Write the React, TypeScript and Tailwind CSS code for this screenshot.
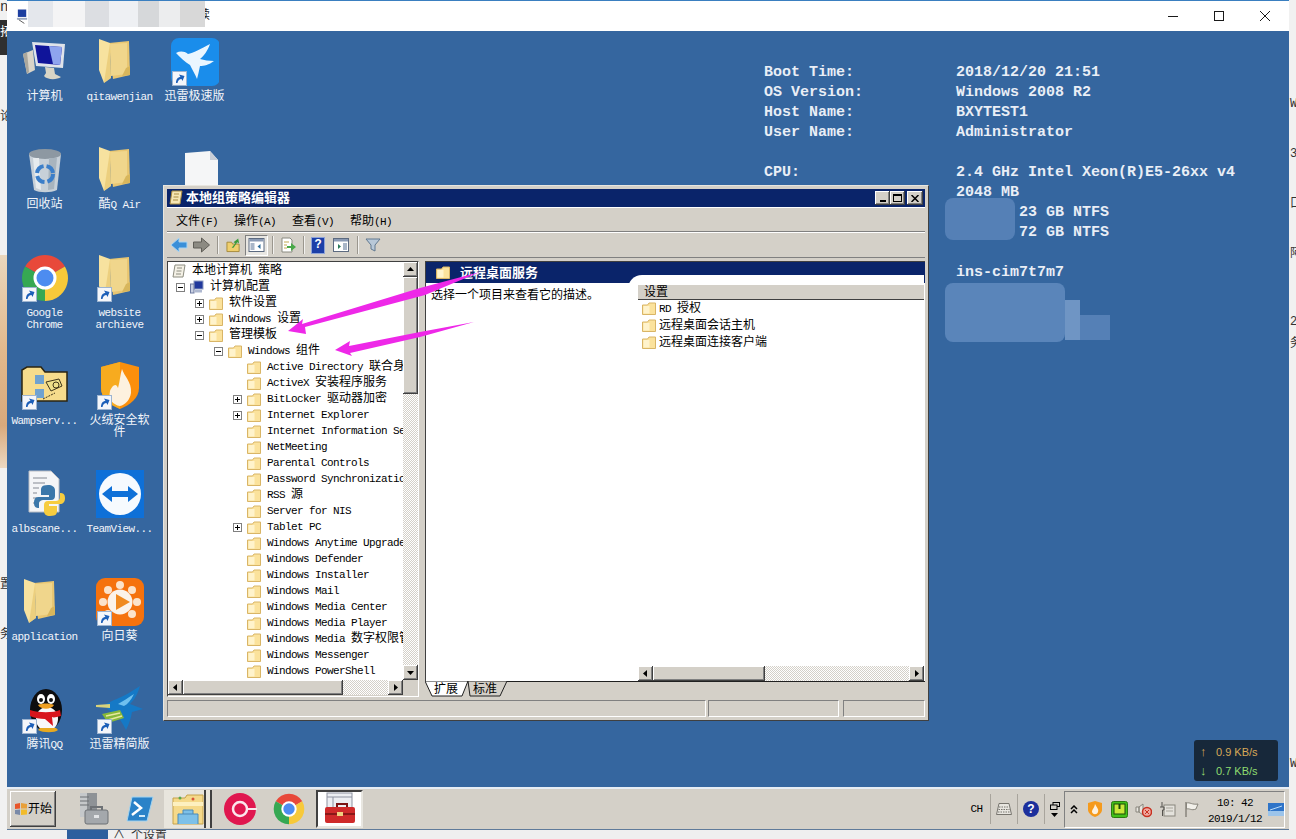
import type { ReactNode } from "react";

const raised = "shadow-[inset_-1px_-1px_#404040,inset_1px_1px_#ffffff,inset_-2px_-2px_#808080]";
const dither = "bg-[repeating-conic-gradient(#ffffff_0_25%,#d4d0c8_0_50%)] bg-[length:2px_2px]";

// latin runs get a narrower mono so they sit at 6px a char like the old bitmap font
function Txt({ text, wrap }: { text: string; wrap?: boolean }) {
  const parts = text.split(/([\x20-\x7e]+)/).filter(Boolean);
  return (
    <>
      {parts.map((p, i) =>
        /^[\x20-\x7e]/.test(p) ? (
          <span key={i} className={wrap ? "text-[11px] tracking-[-0.6px]" : "text-[11px] tracking-[-0.6px] whitespace-pre"}>
            {p}
          </span>
        ) : (
          <span key={i}>{p}</span>
        )
      )}
    </>
  );
}

function Shortcut() {
  return (
    <svg viewBox="0 0 15 15" className="absolute left-[1px] bottom-0 w-[15px] h-[15px]">
      <rect width="15" height="15" fill="#f4f6fa" />
      <rect x="0.5" y="0.5" width="14" height="14" fill="none" stroke="#9db4d0" />
      <path d="M4 12 C4 8 6 6 8.5 6 L7 3.5 L12.5 5 L10.5 10 L9.5 8 C7.5 8 6 9.5 5.5 12 Z" fill="#1c5fb8" />
    </svg>
  );
}

function FolderBig() {
  return (
    <svg viewBox="0 0 48 48" className="w-[48px] h-[48px]">
      <path d="M13 5 L33 3 L34 37 L17 41 Z" fill="#e8c672" />
      <path d="M14 6 L31 5 L31 36 L15 38 Z" fill="#f0d68c" />
      <path d="M3 1 L14 5 L15 40 L8 45 L3 32 Z" fill="#f7e29f" />
      <path d="M14 5 L15 40 L8 45 Z" fill="#e3bf63" opacity="0.55" />
      <path d="M30 30 L34 28 L34 37 L26 38 Z" fill="#d8b65c" />
    </svg>
  );
}

function Computer() {
  return (
    <svg viewBox="0 0 48 48" className="w-[48px] h-[48px]">
      <path d="M2 16 L12 12 L14 32 L6 36 Z" fill="#d9d4c8" />
      <path d="M2 16 L6 14 L8 34 L6 36 Z" fill="#aaa79d" />
      <path d="M11 4 L44 6 L42 30 L15 28 Z" fill="#dfe3ea" />
      <path d="M14 7 L41 9 L39 27 L17 25 Z" fill="#10149a" />
      <path d="M28 8 L41 9 L39 27 L32 26 Z" fill="#8ea4ee" />
      <path d="M24 29 L33 30 L34 36 L40 39 C36 42 26 42 23 38 L25 35 Z" fill="#d8d5c6" />
    </svg>
  );
}

function BlueBird() {
  return (
    <svg viewBox="0 0 48 48" className="w-[48px] h-[48px]">
      <rect x="0" y="0" width="49" height="48" rx="8" fill="#1a8deb" />
      <path d="M5 15 C9 13 13 13 17 16 C22 15 30 11 39 6 C37 12 33 18 29 21 C33 22 38 23 43 23 C38 27 33 28 29 28 C28 33 27 37 26 41 C24 36 21 31 19 27 C14 24 9 19 5 15Z" fill="#eaf6ff" />
    </svg>
  );
}

function Bin() {
  return (
    <svg viewBox="0 0 48 48" className="w-[48px] h-[48px]">
      <path d="M8 8 C14 3 34 3 40 8 L36 44 C30 47 18 47 13 44 Z" fill="#c7d0d8" />
      <ellipse cx="24" cy="8" rx="16" ry="5" fill="#8d98a2" />
      <path d="M12 12 L15 42 L20 44 L18 12 Z" fill="#e6ebee" />
      <path d="M28 12 L27 44 L33 43 L36 12 Z" fill="#a8b4be" />
      <circle cx="24" cy="28" r="8" fill="none" stroke="#3b7ec9" strokeWidth="4" strokeDasharray="10 3" />
    </svg>
  );
}

function DocBlank() {
  return (
    <svg viewBox="0 0 48 48" className="w-[48px] h-[48px]">
      <path d="M8 3 L33 1 L41 10 L41 48 L8 48 Z" fill="#f5f6f7" />
      <path d="M33 1 L33 10 L41 10 Z" fill="#c9ced6" />
    </svg>
  );
}

function ChromeLogo({ size = "w-[48px] h-[48px]" }: { size?: string }) {
  return (
    <svg viewBox="0 0 48 48" className={size}>
      <path d="M24 24 L4.1 12.5 A23 23 0 0 1 43.9 12.5 Z" fill="#e8493a" />
      <path d="M24 24 L43.9 12.5 A23 23 0 0 1 24 47 Z" fill="#f7c93a" />
      <path d="M24 24 L24 47 A23 23 0 0 1 4.1 12.5 Z" fill="#36a853" />
      <circle cx="24" cy="24" r="11.5" fill="#ffffff" />
      <circle cx="24" cy="24" r="8.5" fill="#4d8cf0" />
    </svg>
  );
}

function Wamp() {
  return (
    <svg viewBox="0 0 48 48" className="w-[48px] h-[48px]">
      <path d="M1 8 L1 39 L46 39 L46 10 L24 10 L20 5 L6 5 Z" fill="#f6dc8c" stroke="#2b2410" strokeWidth="1.5" />
      <rect x="14" y="13" width="9" height="9" fill="#6fa2d0" />
      <rect x="14" y="27" width="9" height="9" fill="#6fa2d0" />
      <path d="M25 20 L38 17 L41 24 L30 29 Z" fill="#efe08a" stroke="#40361a" />
      <circle cx="35" cy="23" r="3" fill="none" stroke="#40361a" />
      <path d="M22 37 L34 31" stroke="#40361a" strokeDasharray="2 1" />
    </svg>
  );
}

function FlameShield() {
  return (
    <svg viewBox="0 0 48 48" className="w-[48px] h-[48px]">
      <path d="M5 5 L24 0 L43 5 L43 26 C43 36 34 43 24 47 C14 43 5 36 5 26 Z" fill="#fb8f0c" />
      <path d="M5 5 L24 0 L24 47 C14 43 5 36 5 26 Z" fill="#f7ab1f" />
      <path d="M26 7 C28 14 36 20 35 31 C34 38 29 43 24 44 C17 43 12 37 14 29 C16 24 20 20 22 26 C24 19 24 13 26 7Z" fill="#fdf1df" />
    </svg>
  );
}

function PythonDoc() {
  return (
    <svg viewBox="0 0 48 48" className="w-[48px] h-[48px]">
      <path d="M8 1 L30 1 L38 9 L38 42 L8 42 Z" fill="#f4f5f7" stroke="#b9bdc4" />
      <path d="M12 8 H26 M12 13 H24 M12 18 H18 M12 23 H16 M12 28 H16 M12 33 H16" stroke="#a9adb5" strokeWidth="1.5" />
      <path d="M27 15 C20 15 20 18 20 21 V25 H28 V27 H17 C14 27 13 30 13 33 C13 37 15 38 18 38 V34 C18 31 20 30 23 30 H30 C33 30 34 28 34 26 V20 C34 17 31 15 27 15Z" fill="#3a77aa" />
      <path d="M29 46 C36 46 36 43 36 40 V36 H28 V34 H39 C42 34 44 32 44 28 C44 24 42 23 39 23 V27 C39 30 37 31 34 31 H27 C24 31 23 33 23 35 V41 C23 44 25 46 29 46Z" fill="#f6cc3f" />
    </svg>
  );
}

function TeamViewer() {
  return (
    <svg viewBox="0 0 48 48" className="w-[48px] h-[48px]">
      <rect width="48" height="48" fill="#0e70d8" />
      <circle cx="24" cy="24" r="21" fill="#f6fafe" />
      <path d="M6 24 L16 16 L16 21 L32 21 L32 16 L42 24 L32 32 L32 27 L16 27 L16 32 Z" fill="#0e70d8" />
    </svg>
  );
}

function SunLogin() {
  return (
    <svg viewBox="0 0 48 48" className="w-[48px] h-[48px]">
      <rect width="48" height="48" rx="9" fill="#f5720e" />
      <circle cx="24" cy="24" r="12.5" fill="#fbf3ea" />
      <g fill="#fbe3cb">
        <circle cx="24" cy="7" r="4" />
        <circle cx="36" cy="12" r="4" />
        <circle cx="41" cy="24" r="4" />
        <circle cx="36" cy="36" r="4" />
        <circle cx="12" cy="36" r="4" />
        <circle cx="7" cy="24" r="4" />
        <circle cx="12" cy="12" r="4" />
      </g>
      <path d="M20 16 L34 24 L20 32 Z" fill="#f08a20" />
    </svg>
  );
}

function Penguin() {
  return (
    <svg viewBox="0 0 48 48" className="w-[48px] h-[48px]">
      <ellipse cx="25" cy="24" rx="16" ry="21" fill="#0d0d0f" />
      <ellipse cx="26" cy="33" rx="11" ry="12" fill="#f8f8f8" />
      <ellipse cx="20" cy="13" rx="4" ry="5" fill="#fff" />
      <ellipse cx="30" cy="13" rx="4" ry="5" fill="#fff" />
      <circle cx="20" cy="14" r="2" fill="#111" />
      <circle cx="30" cy="14" r="2" fill="#111" />
      <path d="M17 19 C22 17 28 17 33 19 C30 24 20 24 17 19Z" fill="#ef9f22" />
      <path d="M9 24 C18 27 32 27 39 24 L40 30 C35 31 33 32 31 31 L32 40 L24 33 C19 33 13 32 9 30 Z" fill="#d8141c" />
      <path d="M17 44 C22 47 34 47 37 44 L35 42 L19 42 Z" fill="#e8a91f" />
    </svg>
  );
}

function ThunderBird() {
  return (
    <svg viewBox="0 0 48 48" className="w-[48px] h-[48px]">
      <path d="M8 19 L18 14 C24 12 32 8 44 0 C41 10 38 14 34 18 L47 23 L36 26 C35 32 33 38 30 44 C27 38 24 34 22 30 C18 28 12 24 8 19Z" fill="#1579c6" />
      <path d="M22 18 C27 15 32 12 38 8 C35 14 32 18 28 20Z" fill="#6fc0ef" />
      <path d="M0 19 L14 18 L14 22 L0 21Z" fill="#d9d27a" />
      <path d="M6 28 L24 24 L28 32 L12 37Z" fill="#87b83a" />
      <path d="M10 30 L24 27 M12 34 L26 30" stroke="#e6e8a0" strokeWidth="1.5" />
    </svg>
  );
}

function DesktopIcon({ label, shortcut, children }: { label: string; shortcut?: boolean; children: ReactNode }) {
  return (
    <div className="flex flex-col items-center pt-[1px]">
      <div className="relative w-[48px] h-[48px]">
        {children}
        {shortcut && <Shortcut />}
      </div>
      <div className="mt-[5px] w-[70px] text-center leading-[12px] text-[12px] text-[#f2f5fa] break-words">
        <Txt text={label} wrap />
      </div>
    </div>
  );
}

function Folder() {
  return (
    <svg viewBox="0 0 14 13" className="w-[14px] h-[13px] shrink-0">
      <path d="M0.5 3 L0.5 12.5 L13.5 12.5 L13.5 1 L7 1 L5.5 3 Z" fill="#fbe29c" stroke="#d9b566" />
      <rect x="1.5" y="4" width="6" height="7.5" fill="#fff3cc" />
    </svg>
  );
}

function Expander({ open }: { open: boolean }) {
  return (
    <svg viewBox="0 0 9 9" className="w-[9px] h-[9px]">
      <rect x="0.5" y="0.5" width="8" height="8" fill="#fff" stroke="#808080" />
      <path d="M2 4.5 H7" stroke="#000" />
      {!open && <path d="M4.5 2 V7" stroke="#000" />}
    </svg>
  );
}

function ArrowBtn({ dir }: { dir: "up" | "down" | "left" | "right" }) {
  const pts = { up: "4,9 11,9 7.5,5", down: "4,6 11,6 7.5,10", left: "9,4 9,11 5,7.5", right: "6,4 6,11 10,7.5" };
  return (
    <div className={`w-[15px] h-[15px] shrink-0 bg-[#d4d0c8] ${raised}`}>
      <svg viewBox="0 0 15 15" className="w-[15px] h-[15px]">
        <polygon points={pts[dir]} fill="#000" />
      </svg>
    </div>
  );
}

const treeIndent = ["pl-[4px]", "pl-[3px]", "pl-[22px]", "pl-[41px]", "pl-[60px]"];

type TreeRow = { level: number; text: string; exp?: "open" | "shut"; icon?: "doc" | "pc" };

const treeRows: TreeRow[] = [
  { level: 0, text: "本地计算机 策略", icon: "doc" },
  { level: 1, text: "计算机配置", exp: "open", icon: "pc" },
  { level: 2, text: "软件设置", exp: "shut" },
  { level: 2, text: "Windows 设置", exp: "shut" },
  { level: 2, text: "管理模板", exp: "open" },
  { level: 3, text: "Windows 组件", exp: "open" },
  { level: 4, text: "Active Directory 联合身份验证服务" },
  { level: 4, text: "ActiveX 安装程序服务" },
  { level: 4, text: "BitLocker 驱动器加密", exp: "shut" },
  { level: 4, text: "Internet Explorer", exp: "shut" },
  { level: 4, text: "Internet Information Services" },
  { level: 4, text: "NetMeeting" },
  { level: 4, text: "Parental Controls" },
  { level: 4, text: "Password Synchronization" },
  { level: 4, text: "RSS 源" },
  { level: 4, text: "Server for NIS" },
  { level: 4, text: "Tablet PC", exp: "shut" },
  { level: 4, text: "Windows Anytime Upgrade" },
  { level: 4, text: "Windows Defender" },
  { level: 4, text: "Windows Installer" },
  { level: 4, text: "Windows Mail" },
  { level: 4, text: "Windows Media Center" },
  { level: 4, text: "Windows Media Player" },
  { level: 4, text: "Windows Media 数字权限管理" },
  { level: 4, text: "Windows Messenger" },
  { level: 4, text: "Windows PowerShell" },
  { level: 4, text: "Windows SideShow" },
];

function TreeIcon({ kind }: { kind?: "doc" | "pc" }) {
  if (kind === "doc")
    return (
      <svg viewBox="0 0 14 14" className="w-[14px] h-[14px] shrink-0">
        <path d="M3 1 H13 L11 13 H1 Z" fill="#f4f1e6" stroke="#8c8c80" />
        <path d="M5 4 H10 M4.5 7 H9.5 M4 10 H9" stroke="#8c8c80" />
      </svg>
    );
  if (kind === "pc")
    return (
      <svg viewBox="0 0 14 14" className="w-[14px] h-[14px] shrink-0">
        <rect x="4" y="1" width="9" height="8" fill="#20389c" stroke="#8d9bc0" />
        <rect x="0.5" y="4" width="3.5" height="9" fill="#c9d0e2" stroke="#6d7aa0" />
        <rect x="5" y="10" width="7" height="2.5" fill="#aeb8d0" />
      </svg>
    );
  return <Folder />;
}

function ToolIcon({ children, cls }: { children: ReactNode; cls: string }) {
  return (
    <svg viewBox="0 0 16 16" className={`h-[16px] shrink-0 ${cls}`}>
      {children}
    </svg>
  );
}

function ToolSep({ cls }: { cls: string }) {
  return <div className={`w-[2px] h-[18px] border-l border-[#9a968e] bg-white/70 shrink-0 ${cls}`} />;
}

function GroupPolicyWindow() {
  return (
    <div className="absolute left-[156px] top-[154px] w-[766px] h-[536px] p-[3px] bg-[#d4d0c8] border border-t-[#e8e6e0] border-l-[#e8e6e0] border-r-[#404040] border-b-[#404040] flex flex-col">
      <div className="h-[18px] shrink-0 bg-[#0a246a] flex items-center pl-[2px] pr-[2px]">
        <svg viewBox="0 0 14 16" className="w-[14px] h-[16px]">
          <path d="M3 1 H13 L11 14 H1 Z" fill="#f6e6b4" stroke="#a88a40" />
          <path d="M5 4 H10 M4.5 7 H9.5 M4 10 H9" stroke="#a88a40" />
        </svg>
        <span className="ml-[3px] pt-[1px] text-white font-bold text-[13px] leading-[16px]">本地组策略编辑器</span>
        <div className="ml-auto flex items-center">
          <div className={`w-[15px] h-[14px] bg-[#d4d0c8] ${raised} flex items-end justify-center pb-[3px]`}>
            <div className="w-[6px] h-[2px] bg-black" />
          </div>
          <div className={`w-[15px] h-[14px] bg-[#d4d0c8] ${raised} flex items-center justify-center`}>
            <div className="w-[9px] h-[8px] border border-t-2 border-black" />
          </div>
          <div className={`ml-[2px] w-[16px] h-[14px] bg-[#d4d0c8] ${raised} flex items-center justify-center`}>
            <svg viewBox="0 0 8 7" className="w-[8px] h-[7px]">
              <path d="M0.5 0 L7.5 7 M7.5 0 L0.5 7" stroke="#000" strokeWidth="1.5" />
            </svg>
          </div>
        </div>
      </div>
      <div className="h-[25px] shrink-0 flex items-center gap-[16px] pl-[9px] pt-[4px] text-[12px] text-black border-t border-white border-b border-b-[#808080]">
        <span><Txt text="文件(F)" /></span>
        <span><Txt text="操作(A)" /></span>
        <span><Txt text="查看(V)" /></span>
        <span><Txt text="帮助(H)" /></span>
      </div>
      <div className="h-[26px] shrink-0 flex items-center border-t border-white border-b border-b-[#808080]">
        <ToolIcon cls="w-[18px] ml-[3px]">
          <path d="M0 8 L8 1 V5 H16 V11 H8 V15 Z" fill="#3a8fd8" stroke="#a8d4f2" />
        </ToolIcon>
        <ToolIcon cls="w-[17px] ml-[5px]">
          <path d="M16 8 L8 1 V5 H0 V11 H8 V15 Z" fill="#8c8a82" stroke="#5f5d57" />
        </ToolIcon>
        <ToolSep cls="ml-[7px]" />
        <ToolIcon cls="w-[15px] ml-[7px]">
          <path d="M1 5 H6 L7 7 H14 V15 H1 Z" fill="#f0cf6e" stroke="#a58a3a" />
          <path d="M6 11 L10 6 L8 5 L13 1 L14 6 L12 5 L8 11 Z" fill="#3c9c3c" />
        </ToolIcon>
        <div className="ml-[4px] w-[23px] h-[21px] flex items-center justify-center border border-t-[#808080] border-l-[#808080] border-r-white border-b-white bg-[#e9e7e2]">
          <ToolIcon cls="w-[17px]">
            <rect x="0.5" y="1.5" width="15" height="13" fill="#fff" stroke="#5c6a80" />
            <rect x="1" y="2" width="14" height="2.5" fill="#8a9ab4" />
            <rect x="2" y="6" width="4" height="7" fill="#a9b6c8" />
            <path d="M12 7 L9 9.5 L12 12 Z" fill="#2a6a9a" />
          </ToolIcon>
        </div>
        <ToolSep cls="ml-[4px]" />
        <ToolIcon cls="w-[16px] ml-[6px]">
          <path d="M2 1 H10 L12 3 V15 H2 Z" fill="#fff" stroke="#8a8a80" />
          <path d="M4 5 H9 M4 8 H7 M4 11 H7" stroke="#c4a850" />
          <path d="M7 9 H11 V6 L16 10 L11 14 V11 H7 Z" fill="#49a849" />
        </ToolIcon>
        <ToolSep cls="ml-[7px]" />
        <div className="ml-[6px] w-[14px] h-[17px] bg-[#1c3fa8] border border-[#8da2d8] flex items-center justify-center text-white font-bold text-[12px] shrink-0">
          ?
        </div>
        <ToolIcon cls="w-[16px] ml-[8px]">
          <rect x="0.5" y="1.5" width="15" height="13" fill="#fff" stroke="#5c6a80" />
          <rect x="1" y="2" width="14" height="2.5" fill="#8a9ab4" />
          <rect x="10" y="6" width="4" height="7" fill="#a9b6c8" />
          <path d="M5 7 L8 9.5 L5 12 Z" fill="#2a7a5a" />
        </ToolIcon>
        <ToolSep cls="ml-[8px]" />
        <ToolIcon cls="w-[16px] ml-[6px]">
          <path d="M1 2 H15 L10 8 V14 L6 12 V8 Z" fill="#b8c8d8" stroke="#607890" />
        </ToolIcon>
      </div>

      <div className="mt-[3px] h-[436px] shrink-0 flex gap-[6px]">
        {/* tree */}
        <div className="w-[252px] flex flex-col border border-t-[#404040] border-l-[#404040] border-r-white border-b-white">
          <div className="h-[418px] flex">
            <div className="w-[235px] bg-white overflow-hidden pt-[1px] text-[12px] text-black">
              {treeRows.map((r, i) => (
                <div key={i} className={`h-[16px] flex items-center whitespace-nowrap ${treeIndent[r.level]}`}>
                  {r.level > 0 && (
                    <div className="w-[19px] shrink-0 flex justify-center pr-[1px]">
                      {r.exp && <Expander open={r.exp === "open"} />}
                    </div>
                  )}
                  <TreeIcon kind={r.icon} />
                  <span className="ml-[6px]">
                    <Txt text={r.text} />
                  </span>
                </div>
              ))}
            </div>
            <div className={`w-[15px] flex flex-col ${dither}`}>
              <ArrowBtn dir="up" />
              <div className={`h-[117px] bg-[#d4d0c8] ${raised}`} />
              <div className="flex-1" />
              <ArrowBtn dir="down" />
            </div>
          </div>
          <div className="h-[15px] flex">
            <div className={`w-[235px] flex ${dither}`}>
              <ArrowBtn dir="left" />
              <div className={`w-[160px] bg-[#d4d0c8] ${raised}`} />
              <div className="flex-1" />
              <ArrowBtn dir="right" />
            </div>
            <div className="flex-1 bg-[#d4d0c8]" />
          </div>
        </div>

        {/* right pane */}
        <div className="w-[500px] flex flex-col">
          <div className="h-[420px] flex flex-col border-l border-t border-[#404040] bg-white">
            <div className="h-[21px] shrink-0 bg-[#0a246a] flex items-center pl-[10px] text-white font-bold text-[13px]">
              <Folder />
              <span className="ml-[10px] pt-[3px]">远程桌面服务</span>
            </div>
            <div className="flex-1 flex min-h-0">
              <div className="w-[202px] shrink-0 pl-[5px] pt-[7px] text-[12px] leading-[13px] text-black">
                选择一个项目来查看它的描述。
              </div>
              <div className="w-[296px] -mt-[8px] bg-white rounded-tl-[14px] pl-[10px] pt-[10px] flex flex-col relative">
                <div className="h-[15px] shrink-0 bg-[#d4d0c8] border-b border-[#404040] text-[12px] leading-[14px] pt-[1px] pl-[6px] text-black">
                  设置
                </div>
                <div className="flex-1 text-[12px] text-black">
                  {["RD 授权", "远程桌面会话主机", "远程桌面连接客户端"].map((t) => (
                    <div key={t} className="h-[17px] flex items-center pl-[4px]">
                      <Folder />
                      <span className="ml-[3px]">
                        <Txt text={t} />
                      </span>
                    </div>
                  ))}
                </div>
                <div className={`h-[15px] shrink-0 flex ${dither}`}>
                  <ArrowBtn dir="left" />
                  <div className={`w-[112px] bg-[#d4d0c8] ${raised}`} />
                  <div className="flex-1" />
                  <ArrowBtn dir="right" />
                </div>
              </div>
            </div>
          </div>
          <div className="relative h-[16px] text-[12px] leading-[15px] text-black">
            <svg viewBox="0 0 500 16" className="absolute inset-0 w-[500px] h-[16px]">
              <polygon points="0,0 7,15 37,15 43,0" fill="#ffffff" stroke="#202020" />
              <polygon points="43,0 45,15 75,15 82,0" fill="#d4d0c8" stroke="#202020" />
              <path d="M82 0.5 H500" stroke="#202020" />
            </svg>
            <div className="relative flex pl-[9px] pt-[2px]">
              <span className="w-[39px]">扩展</span>
              <span>标准</span>
            </div>
          </div>
        </div>
      </div>

      <div className="mt-[3px] h-[17px] shrink-0 flex gap-[2px] pl-[0px]">
        <div className="w-[539px] border border-t-[#808080] border-l-[#808080] border-r-white border-b-white" />
        <div className="w-[131px] border border-t-[#808080] border-l-[#808080] border-r-white border-b-white" />
        <div className="ml-[2px] flex-1 border border-t-[#808080] border-l-[#808080] border-r-white border-b-white" />
      </div>
    </div>
  );
}

function SystemInfo() {
  const rows = [
    ["Boot Time:", "2018/12/20 21:51"],
    ["OS Version:", "Windows 2008 R2"],
    ["Host Name:", "BXYTEST1"],
    ["User Name:", "Administrator"],
    ["", ""],
    ["CPU:", "2.4 GHz Intel Xeon(R)E5-26xx v4"],
    ["", "2048 MB"],
    ["", "       23 GB NTFS"],
    ["", "       72 GB NTFS"],
    ["", ""],
    ["", "ins-cim7t7m7"],
  ];
  return (
    <div className="absolute left-[757px] top-[32px] grid grid-cols-[192px_1fr] text-[15px] leading-[20px] font-bold text-[#e9eef6] font-['Liberation_Mono',monospace] whitespace-pre">
      {rows.map((r, i) => (
        <div key={i} className="contents">
          <div className="h-[20px]">{r[0]}</div>
          <div className="h-[20px]">{r[1]}</div>
        </div>
      ))}
    </div>
  );
}

function Arrows() {
  return (
    <svg viewBox="0 0 1282 756" className="absolute inset-0 w-[1282px] h-[756px] pointer-events-none">
      <polygon points="281,300 296,288 295,293 413,257 473,241 418,264 298,296 299,303" fill="#ee28e8" />
      <polygon points="328,319 343,310 342,315 413,301 467,291 413,306 343,322 345,325" fill="#ee28e8" />
    </svg>
  );
}

function Taskbar() {
  return (
    <div className="h-[43px] shrink-0 bg-[#d4d0c8] border-t-2 border-[#e6edf5] border-b border-b-[#5f7a9a] flex items-center text-black">
      <div className={`ml-[3px] w-[46px] h-[36px] flex items-center justify-center bg-[#d4d0c8] ${raised} text-[12px]`}>
        <svg viewBox="0 0 14 14" className="w-[14px] h-[14px]">
          <path d="M1 2 L6 1 L6 6.5 L1 7 Z" fill="#e8562a" />
          <path d="M7 1 L13 2 L13 6.5 L7 6.5 Z" fill="#e8a03a" />
          <path d="M1 8 L6 7.5 L6 13 L1 12 Z" fill="#7a8aa8" />
          <path d="M7 7.5 L13 7.5 L13 12.5 L7 13 Z" fill="#f2bb2a" />
        </svg>
        <span className="pt-[2px]">开始</span>
      </div>
      <div className="ml-[12px] w-[48px] flex justify-center">
        <svg viewBox="0 0 34 34" className="w-[34px] h-[34px]">
          <rect x="5" y="1" width="17" height="24" fill="#8e9296" />
          <rect x="5" y="1" width="7" height="24" fill="#c5c8ca" />
          <path d="M5 5 H14 M5 9 H14 M5 13 H14" stroke="#6d7175" />
          <rect x="10" y="18" width="23" height="14" rx="2" fill="#a4a8ac" stroke="#6d7175" />
          <path d="M16 18 V15 H27 V18" fill="none" stroke="#6d7175" strokeWidth="2" />
          <rect x="19" y="23" width="5" height="3" fill="#e2e4e6" />
        </svg>
      </div>
      <div className="w-[48px] flex justify-center">
        <svg viewBox="0 0 28 26" className="w-[28px] h-[26px]">
          <path d="M6 1 H27 L21 25 H1 Z" fill="#2a82c8" stroke="#a3d4f0" />
          <path d="M8 6 L15 12 L6 19" fill="none" stroke="#fff" strokeWidth="2.5" />
          <path d="M13 20 H19" stroke="#cfe9fa" strokeWidth="2" />
        </svg>
      </div>
      <div className="relative w-[48px] h-[38px] flex justify-center items-center bg-[#e8e5dd]">
        <svg viewBox="0 0 34 34" className="w-[34px] h-[34px]">
          <path d="M2 6 H14 L16 3 H32 V32 H2 Z" fill="#f5d98a" stroke="#c6a24a" />
          <rect x="2" y="10" width="30" height="4" fill="#fdf0c0" />
          <circle cx="9" cy="6" r="1.5" fill="#5aa84a" />
          <circle cx="22" cy="7" r="1.5" fill="#d8543a" />
          <path d="M7 32 V22 H27 V32 M12 22 V18 H22 V22" fill="#7dc0e8" stroke="#4a8ab8" />
        </svg>
        <div className="absolute right-0 top-0 bottom-0 w-[8px] border-x-2 border-[#404040]" />
      </div>
      <div className="ml-[4px] w-[48px] flex justify-center">
        <svg viewBox="0 0 34 34" className="w-[34px] h-[34px]">
          <circle cx="17" cy="17" r="16" fill="#e0174f" />
          <circle cx="17" cy="17" r="7" fill="#e0174f" stroke="#fbe6ec" strokeWidth="2.5" />
          <path d="M24 17 H34" stroke="#fbe6ec" strokeWidth="2" />
        </svg>
      </div>
      <div className="ml-[1px] w-[48px] flex justify-center">
        <ChromeLogo size="w-[32px] h-[32px]" />
      </div>
      <div className="ml-[3px] w-[47px] h-[38px] flex justify-center items-center bg-white border-2 border-t-[#404040] border-l-[#404040] border-r-[#e8e6e0] border-b-[#e8e6e0]">
        <svg viewBox="0 0 34 34" className="w-[34px] h-[34px]">
          <rect x="4" y="1" width="25" height="20" fill="#eceef2" stroke="#8d92a0" />
          <path d="M4 5 H29 M10 5 V21" stroke="#8d92a0" />
          <path d="M14 15 V12 H24 V15" fill="none" stroke="#7a1414" strokeWidth="2" />
          <rect x="2" y="15" width="30" height="16" rx="2" fill="#cf2a2a" />
          <rect x="2" y="21" width="30" height="2" fill="#8a1818" />
          <rect x="14" y="20" width="6" height="4" fill="#f0d080" />
        </svg>
      </div>

      <div className="ml-auto flex items-center h-[37px] pr-[4px]">
        <div className="w-[28px] h-[30px] flex items-center justify-center border-r border-[#a8a49c] text-[12px]">
          <Txt text="CH" />
        </div>
        <div className="w-[27px] h-[30px] flex items-center justify-center border-r border-[#a8a49c]">
          <svg viewBox="0 0 16 12" className="w-[16px] h-[12px]">
            <path d="M3 0.5 H13 L15.5 11.5 H0.5 Z" fill="#e8e6e0" stroke="#77756e" />
            <path d="M3 4 H13 M2.5 6.5 H13.5 M2 9 H14" stroke="#77756e" strokeDasharray="1.5 1" />
          </svg>
        </div>
        <div className="w-[27px] h-[30px] flex items-center justify-center border-r border-[#a8a49c]">
          <div className="w-[16px] h-[16px] rounded-full bg-[#1c2f9c] text-white font-bold text-[12px] leading-[16px] text-center font-['Liberation_Sans',sans-serif]">
            ?
          </div>
        </div>
        <div className="w-[19px] flex flex-col items-center gap-[3px]">
          <svg viewBox="0 0 10 8" className="w-[10px] h-[8px]">
            <rect x="3" y="0.5" width="6.5" height="4" fill="none" stroke="#000" />
            <rect x="0.5" y="3" width="6.5" height="4.5" fill="#d4d0c8" stroke="#000" />
          </svg>
          <svg viewBox="0 0 7 4" className="w-[7px] h-[4px]">
            <polygon points="0,0 7,0 3.5,4" fill="#000" />
          </svg>
        </div>
        <div className="h-[37px] flex items-center border border-t-[#808080] border-l-[#808080] border-r-white border-b-white">
          <div className="w-[18px] flex justify-center">
            <svg viewBox="0 0 8 9" className="w-[8px] h-[9px]">
              <path d="M1 4 L4 1 L7 4 M1 8 L4 5 L7 8" fill="none" stroke="#000" strokeWidth="1.5" />
            </svg>
          </div>
          <div className="w-[24px] flex justify-center">
            <svg viewBox="0 0 16 16" className="w-[16px] h-[16px]">
              <path d="M1 2 L8 0 L15 2 V9 C15 12 11 15 8 16 C5 15 1 12 1 9 Z" fill="#f59a1c" />
              <path d="M8 3 C10 7 12 8 11 11 C10 14 6 14 5 11 C5 8 7 8 8 3Z" fill="#fdf1df" />
            </svg>
          </div>
          <div className="w-[24px] flex justify-center">
            <svg viewBox="0 0 17 17" className="w-[17px] h-[17px]">
              <rect x="0.5" y="0.5" width="16" height="16" rx="2" fill="#42c018" stroke="#2a7a10" />
              <rect x="3" y="3" width="11" height="10" fill="#c8e83a" stroke="#1a4a08" />
              <path d="M8.5 3 V8" stroke="#1a4a08" strokeWidth="2" />
            </svg>
          </div>
          <div className="w-[24px] flex justify-center">
            <svg viewBox="0 0 17 17" className="w-[17px] h-[17px]">
              <path d="M1 6 H4 V11 H1 Z M4 6 L8 3 V14 L4 11 Z" fill="#e8e6e0" stroke="#88857c" />
              <circle cx="12" cy="11" r="4.5" fill="#f0a8a0" stroke="#c83020" strokeWidth="1.5" />
              <path d="M10 9 L14 13 M14 9 L10 13" stroke="#c83020" />
            </svg>
          </div>
          <div className="w-[24px] flex justify-center">
            <svg viewBox="0 0 17 17" className="w-[17px] h-[17px]">
              <rect x="5" y="4" width="11" height="11" fill="#e4e2dc" stroke="#88857c" />
              <path d="M7 7 H14 M7 10 H14" stroke="#a8a59c" />
              <path d="M3 1 V6 M1 6 H5 V9 H3.5 V15" fill="none" stroke="#55534e" />
            </svg>
          </div>
          <div className="w-[24px] flex justify-center">
            <svg viewBox="0 0 17 17" className="w-[17px] h-[17px]">
              <path d="M3 1 V16" stroke="#88857c" strokeWidth="1.5" />
              <path d="M3.5 2 C7 1 9 4 15 3 L13 8 C8 10 7 7 3.5 8 Z" fill="#f2f0ea" stroke="#88857c" />
            </svg>
          </div>
          <div className="w-[64px] pt-[3px] text-center text-[12px] leading-[16px]">
            <div><Txt text="10: 42" /></div>
            <div><Txt text="2019/1/12" /></div>
          </div>
          <div className="w-[17px] flex justify-center">
            <svg viewBox="0 0 16 13" className="w-[16px] h-[13px]">
              <rect width="16" height="13" fill="#2f74c8" />
              <rect y="8" width="16" height="5" fill="#9cc4ea" />
              <path d="M2 7 L14 3" stroke="#bcdcf6" />
            </svg>
          </div>
        </div>
      </div>
    </div>
  );
}

export default function App() {
  return (
    <div className="w-[1296px] h-[839px] overflow-hidden bg-[#eeeeee] flex flex-col text-[12px] font-['Liberation_Mono','Noto_Sans_CJK_SC',monospace]">
      <div className="h-[830px] flex shrink-0">
        {/* what shows of the machine behind, left side */}
        <div className="w-[7px] shrink-0 overflow-hidden flex flex-col bg-[#f1f1f1] text-[#333] leading-[14px]">
          <div className="h-[20px] text-[14px]">n.</div>
          <div className="h-[35px] bg-[#2f2f2f] text-white pt-[6px]">拓</div>
          <div className="h-[55px]" />
          <div className="h-[145px]">论</div>
          <div className="h-[213px] bg-[linear-gradient(180deg,#ead7bd,#e2b98c_45%,#d8a97c_80%,#ecd9c2)]" />
          <div className="h-[110px]" />
          <div className="h-[50px]">置</div>
          <div>务</div>
        </div>

        <div className="w-[1282px] shrink-0 flex flex-col">
          <div className="relative h-[31px] shrink-0 bg-white border-t border-[#3a7fc0] flex items-center">
            <svg viewBox="0 0 14 16" className="ml-[9px] w-[13px] h-[16px]">
              <rect x="2" y="1" width="9" height="8" fill="#1d3fa0" />
              <rect x="1" y="10" width="11" height="2" fill="#9aa8c0" />
              <path d="M3 12 L9 16" stroke="#555" />
            </svg>
            <span className="ml-[169px] text-[12px] text-[#222]">续</span>
            <div className="absolute left-[21px] top-0 w-[177px] h-[26px] bg-[linear-gradient(90deg,#e4e7ec_0_14%,#f4f4f5_14%_32%,#dcdee2_32%_46%,#eef0f3_46%_62%,#d6d8da_62%_74%,#ecedee_74%_86%,#d8d8d8_86%_100%)]" />
            <div className="ml-auto flex items-center text-[#1a1a1a]">
              <div className="w-[46px] flex justify-center">
                <div className="w-[10px] h-[1px] bg-[#1a1a1a]" />
              </div>
              <div className="w-[46px] flex justify-center">
                <div className="w-[10px] h-[10px] border border-[#1a1a1a]" />
              </div>
              <div className="w-[46px] flex justify-center mr-[1px]">
                <svg viewBox="0 0 10 10" className="w-[10px] h-[10px]">
                  <path d="M0 0 L10 10 M10 0 L0 10" stroke="#1a1a1a" />
                </svg>
              </div>
            </div>
          </div>

          <div className="relative h-[756px] shrink-0 bg-[#35669f] overflow-hidden">
            <div className="absolute left-[170px] top-[119px]">
              <DocBlank />
            </div>
            <div className="absolute left-0 top-[6px] grid grid-cols-[75px_75px_75px] grid-rows-[repeat(7,108px)]">
              <DesktopIcon label="计算机"><Computer /></DesktopIcon>
              <DesktopIcon label="qitawenjian"><FolderBig /></DesktopIcon>
              <DesktopIcon label="迅雷极速版" shortcut><BlueBird /></DesktopIcon>

              <DesktopIcon label="回收站"><Bin /></DesktopIcon>
              <DesktopIcon label="酷Q Air"><FolderBig /></DesktopIcon>
              <div />

              <DesktopIcon label="Google Chrome" shortcut><ChromeLogo /></DesktopIcon>
              <DesktopIcon label="website archieve" shortcut><FolderBig /></DesktopIcon>
              <div />

              <DesktopIcon label="Wampserv..." shortcut><Wamp /></DesktopIcon>
              <DesktopIcon label="火绒安全软件" shortcut><FlameShield /></DesktopIcon>
              <div />

              <DesktopIcon label="albscane..."><PythonDoc /></DesktopIcon>
              <DesktopIcon label="TeamView..."><TeamViewer /></DesktopIcon>
              <div />

              <DesktopIcon label="application"><FolderBig /></DesktopIcon>
              <DesktopIcon label="向日葵" shortcut><SunLogin /></DesktopIcon>
              <div />

              <DesktopIcon label="腾讯QQ" shortcut><Penguin /></DesktopIcon>
              <DesktopIcon label="迅雷精简版" shortcut><ThunderBird /></DesktopIcon>
              <div />
            </div>

            <SystemInfo />
            {/* the blurred bits of the screenshot */}
            <div className="absolute left-[938px] top-[167px] w-[70px] h-[42px] rounded-[8px] bg-[#5580b6]" />
            <div className="absolute left-[938px] top-[252px] w-[120px] h-[59px] rounded-[8px] bg-[#5a85ba]" />
            <div className="absolute left-[1058px] top-[269px] w-[15px] h-[40px] bg-[#6f95c4]" />
            <div className="absolute left-[1073px] top-[284px] w-[30px] h-[25px] bg-[#5580b6]" />

            <GroupPolicyWindow />
            <Arrows />

            <div className="absolute left-[1187px] top-[709px] w-[84px] h-[41px] rounded-[3px] bg-[#17283a] flex flex-col justify-center gap-[3px] pl-[6px] pt-[2px] text-[11px] leading-[16px] font-['Liberation_Sans',sans-serif]">
              <div className="flex text-[#d8a958]">
                <span className="w-[16px] text-[13px]">↑</span>
                <span>0.9 KB/s</span>
              </div>
              <div className="flex text-[#8fdc70]">
                <span className="w-[16px] text-[13px]">↓</span>
                <span>0.7 KB/s</span>
              </div>
            </div>
          </div>

          <Taskbar />
        </div>

        <div className="w-[7px] shrink-0 overflow-hidden flex flex-col bg-[#f1f1f1] text-[#333] leading-[14px] pl-[1px]">
          <div className="h-[97px]" />
          <div className="h-[50px]">W</div>
          <div className="h-[50px]">3</div>
          <div className="h-[50px]">口</div>
          <div className="h-[68px]">阿</div>
          <div className="h-[22px]">2</div>
          <div className="h-[420px]">务</div>
          <div>W</div>
        </div>
      </div>

      <div className="h-[9px] shrink-0 flex overflow-hidden">
        <div className="w-[67px] bg-[#efefef]" />
        <div className="w-[41px] bg-[#2e5f9e]" />
        <div className="flex-1 bg-[#efefef] pl-[5px] text-[12px] leading-[12px] text-[#333]">
          <Txt text="∧ 个设置" />
        </div>
      </div>
    </div>
  );
}
